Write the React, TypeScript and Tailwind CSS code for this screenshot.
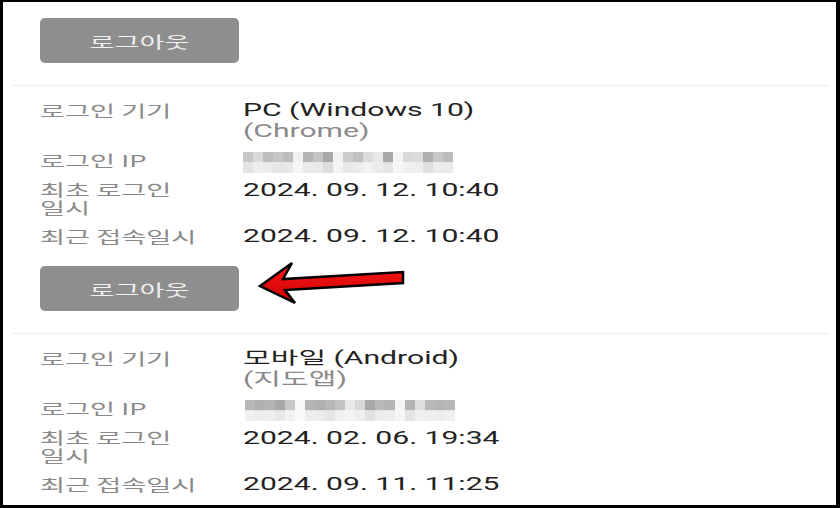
import React from 'react';

const labelLine =
  "block w-fit origin-left scale-x-[1.7] text-[16px] leading-[18px] text-[#8a8a8a] font-['Noto_Sans_CJK_KR',sans-serif]";
const valueCls =
  "block w-fit origin-left scale-x-[1.72] text-[17.5px] leading-[21px] text-[#222222] font-['Roboto','Noto_Sans_CJK_KR',sans-serif]";
const subCls =
  "block w-fit origin-left scale-x-[1.72] text-[17.5px] leading-[21px] text-[#8a8a8a] font-['Roboto','Noto_Sans_CJK_KR',sans-serif]";

const barA = {
  top: ['#c8c8c8', '#dadada', '#bebebe', '#c6c6c6', '#bcbcbc', '#f0f0f0', '#b5b5b5', '#c3c3c3', '#a8a8a8', '#f2f2f2', '#cccccc', '#c0c0c0', '#dcdcdc', '#e8e8e8', '#a9a9a9', '#f3f3f3', '#d9d9d9', '#dcdcdc', '#b0b0b0', '#c8c8c8', '#bdbdbd'],
  bottom: ['#e4e4e4', '#eeeeee', '#ececec', '#e6e6e6', '#e8e8e8', '#f6f6f6', '#eaeaea', '#e8e8e8', '#dedede', '#f4f4f4', '#e8e8e8', '#ececec', '#f2f2f2', '#ececec', '#e6e6e6', '#f6f6f6', '#f0f0f0', '#eeeeee', '#e0e0e0', '#ececec', '#ebebeb'],
};

const barB = {
  top: ['#b8b8b8', '#b0b0b0', '#b4b4b4', '#a9a9a9', '#c8c8c8', '#f8f8f8', '#b4b4b4', '#b0b0b0', '#b8b8b8', '#c2c2c2', '#e8e8e8', '#d8d8d8', '#a8a8a8', '#b8b8b8', '#b4b4b4', '#f4f4f4', '#b4b4b4', '#dedede', '#b8b8b8', '#b4b4b4', '#b8b8b8'],
  bottom: ['#f0f0f0', '#ececec', '#eeeeee', '#e8e8e8', '#f2f2f2', '#fafafa', '#eeeeee', '#ececec', '#e6e6e6', '#f0f0f0', '#f4f4f4', '#eeeeee', '#e2e2e2', '#ececec', '#eeeeee', '#f6f6f6', '#e4e4e4', '#f0f0f0', '#eeeeee', '#ececec', '#f0f0f0'],
};

function BlurBar({ data }: { data: { top: string[]; bottom: string[] } }) {
  return (
    <svg width="210" height="21" viewBox="0 0 210 21" className="block">
      {data.top.map((c, i) => (
        <rect key={'t' + i} x={i * 10} y={0} width={10} height={10.5} fill={c} />
      ))}
      {data.bottom.map((c, i) => (
        <rect key={'b' + i} x={i * 10} y={10.5} width={10} height={10.5} fill={c} />
      ))}
    </svg>
  );
}

function Row({ label, children }: { label: string[]; children: React.ReactNode }) {
  return (
    <div className="grid grid-cols-[203px_1fr] items-start">
      <div className="py-[1.5px]">
        {label.map((l) => (
          <span key={l} className={labelLine}>
            {l}
          </span>
        ))}
      </div>
      <div>{children}</div>
    </div>
  );
}

function LogoutButton() {
  return (
    <button className="ml-[37px] w-[199px] h-[45px] rounded-[5px] bg-[#8e8e8e] flex items-center justify-center">
      <span className="inline-block origin-center scale-x-[1.7] text-[16px] text-[#f0f0f0] font-['Noto_Sans_CJK_KR',sans-serif]">
        로그아웃
      </span>
    </button>
  );
}

type Session = {
  device: string;
  app: string;
  bar: { top: string[]; bottom: string[] };
  barOffset: string;
  first: string;
  last: string;
};

function SessionInfo({ s }: { s: Session }) {
  return (
    <div className="mt-[13px] ml-[37px] flex flex-col gap-2">
      <Row label={['로그인 기기']}>
        <div className="translate-y-[1px]">
          <div className={valueCls}>{s.device}</div>
          <div className={subCls}>{s.app}</div>
        </div>
      </Row>
      <Row label={['로그인 IP']}>
        <div className={'translate-y-[3px] ' + s.barOffset}>
          <BlurBar data={s.bar} />
        </div>
      </Row>
      <Row label={['최초 로그인', '일시']}>
        <div className="translate-y-[2px]">
          <div className={valueCls}>{s.first}</div>
        </div>
      </Row>
      <Row label={['최근 접속일시']}>
        <div className="translate-y-[1px]">
          <div className={valueCls}>{s.last}</div>
        </div>
      </Row>
    </div>
  );
}

const sessions: Session[] = [
  {
    device: 'PC (Windows 10)',
    app: '(Chrome)',
    bar: barA,
    barOffset: 'ml-0',
    first: '2024. 09. 12. 10:40',
    last: '2024. 09. 12. 10:40',
  },
  {
    device: '모바일 (Android)',
    app: '(지도앱)',
    bar: barB,
    barOffset: 'ml-[2px]',
    first: '2024. 02. 06. 19:34',
    last: '2024. 09. 11. 11:25',
  },
];

export default function App() {
  return (
    <div className="relative w-[840px] h-[508px] overflow-hidden bg-white border-black border-t-[2px] border-l-[3px] border-r-[4px] border-b-[3px]">
      <div className="flex flex-col">
        <div className="mt-[16px]">
          <LogoutButton />
        </div>
        <div className="mt-[22px] ml-[9px] mr-[7px] h-px bg-[#ececec]" />
        <SessionInfo s={sessions[0]} />
        <div className="mt-[20px]">
          <LogoutButton />
        </div>
        <div className="mt-[22px] ml-[9px] mr-[7px] h-px bg-[#ececec]" />
        <SessionInfo s={sessions[1]} />
      </div>

      {/* annotation arrow */}
      <svg
        className="absolute left-[252px] top-[256px]"
        width="155"
        height="50"
        viewBox="0 0 155 50"
      >
        <defs>
          <linearGradient id="arrowFill" x1="0" y1="0" x2="0" y2="1">
            <stop offset="0" stopColor="#ff1a1a" />
            <stop offset="1" stopColor="#c80000" />
          </linearGradient>
        </defs>
        <path
          d="M5 28 L37 5 L28 21 L148 14 L148 25 L30 32 L40 45 Z"
          fill="url(#arrowFill)"
          stroke="#000"
          strokeWidth="2.5"
          strokeLinejoin="miter"
        />
      </svg>
    </div>
  );
}
